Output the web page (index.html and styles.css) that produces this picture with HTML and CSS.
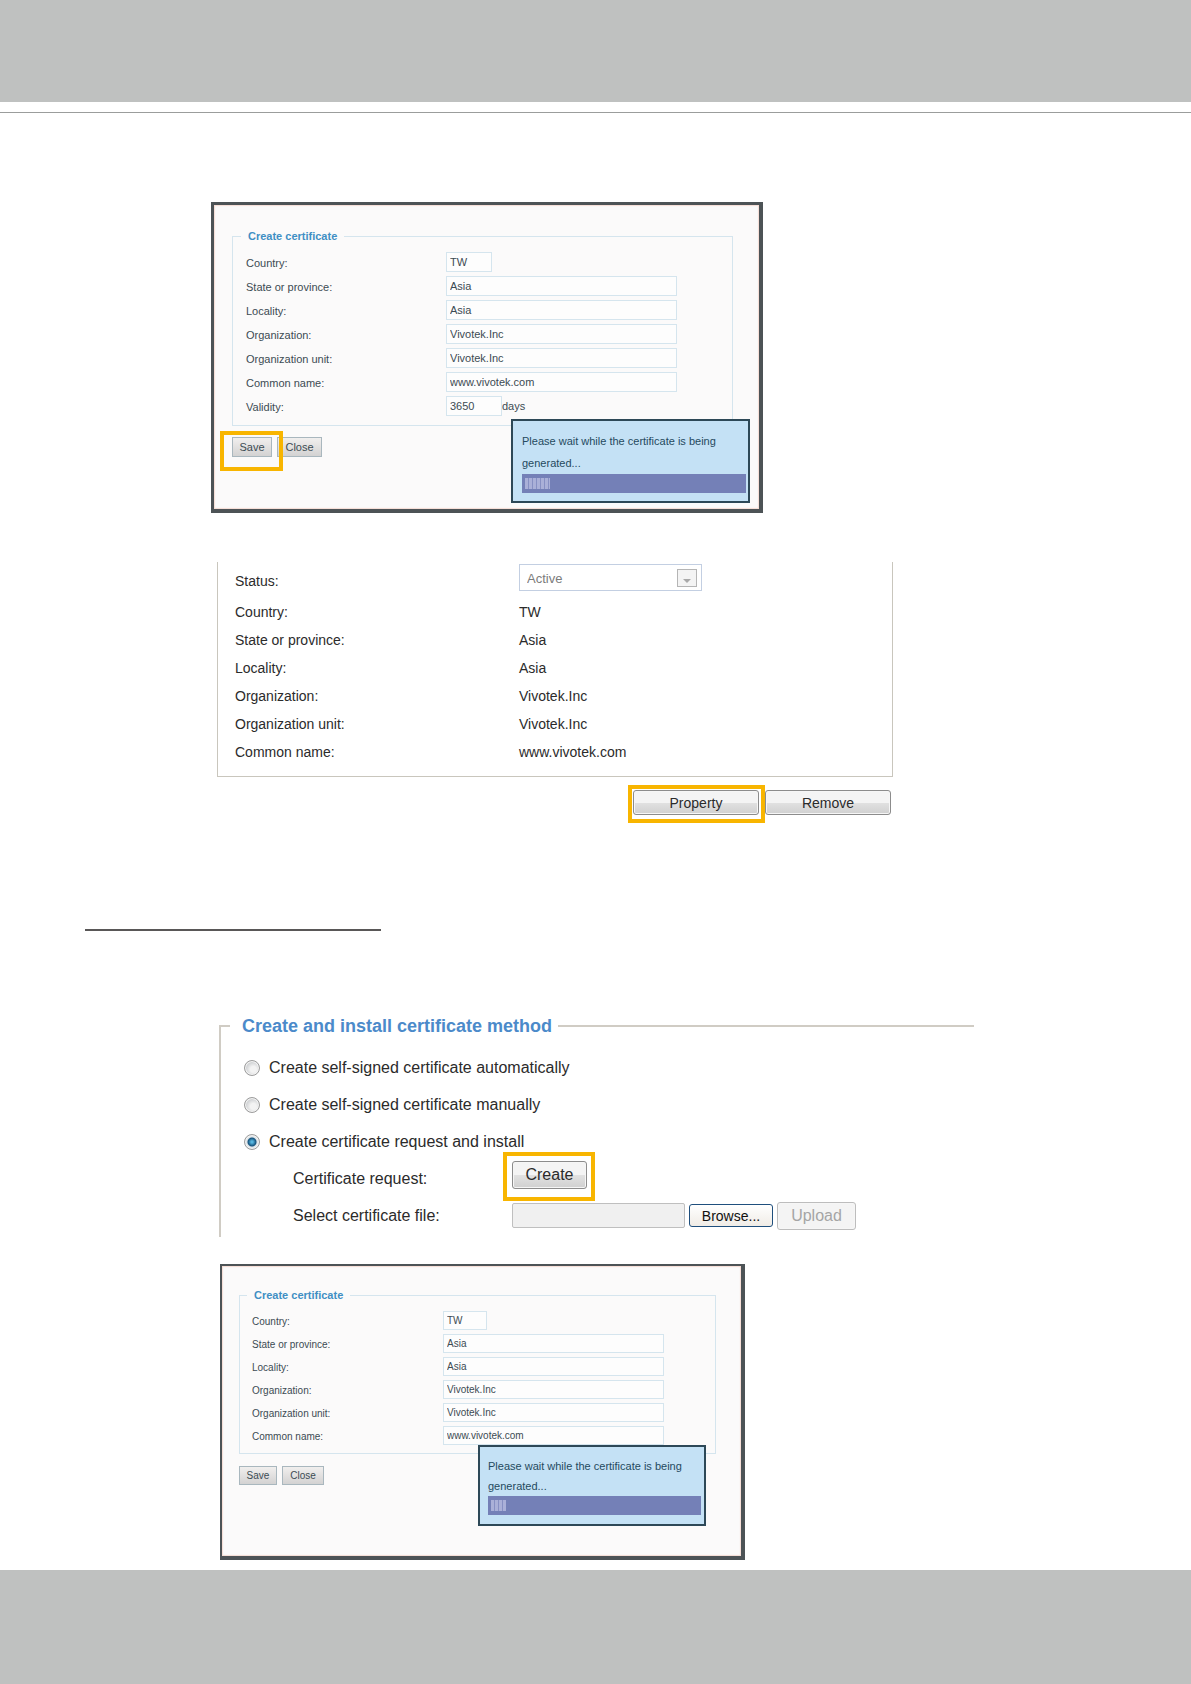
FILE: index.html
```html
<!DOCTYPE html>
<html lang="en">
<head>
<meta charset="utf-8">
<meta name="viewport" content="width=device-width, initial-scale=1">
<title>Create certificate</title>
<link rel="stylesheet" href="styles.css">
</head>
<body>
<header class="band band-top"></header>
<hr class="rule">

<main class="page">
  <form class="dialog">
    <fieldset class="cert">
      <legend>Create certificate</legend>
      <div class="row"><label for="a-country">Country:</label><input id="a-country" class="short" type="text" value="TW"></div>
      <div class="row"><label for="a-state">State or province:</label><input id="a-state" type="text" value="Asia"></div>
      <div class="row"><label for="a-locality">Locality:</label><input id="a-locality" type="text" value="Asia"></div>
      <div class="row"><label for="a-org">Organization:</label><input id="a-org" type="text" value="Vivotek.Inc"></div>
      <div class="row"><label for="a-unit">Organization unit:</label><input id="a-unit" type="text" value="Vivotek.Inc"></div>
      <div class="row"><label for="a-name">Common name:</label><input id="a-name" type="text" value="www.vivotek.com"></div>
      <div class="row"><label for="a-valid">Validity:</label><input id="a-valid" class="medium" type="text" value="3650"><span>days</span></div>
    </fieldset>
    <div class="actions">
      <span class="mark mark-save"><button class="small" type="button">Save</button></span>
      <button class="small small-wide" type="button">Close</button>
    </div>
    <div class="notice" role="status">
      <p>Please wait while the certificate is being generated...</p>
      <div class="bar"><span class="ticks"></span></div>
    </div>
  </form>

  <section class="status">
    <dl class="facts">
      <dt><label for="status">Status:</label></dt>
      <dd>
        <span class="picker">
          <select id="status" disabled><option>Active</option></select>
          <svg class="arrow" viewBox="0 0 20 18" aria-hidden="true"><rect x=".5" y=".5" width="19" height="17" fill="#f4f4f4" stroke="#b5b5b5"/><path d="M6 10h8l-4 4z" fill="#a9a9a9"/></svg>
        </span>
      </dd>
      <dt>Country:</dt><dd>TW</dd>
      <dt>State or province:</dt><dd>Asia</dd>
      <dt>Locality:</dt><dd>Asia</dd>
      <dt>Organization:</dt><dd>Vivotek.Inc</dd>
      <dt>Organization unit:</dt><dd>Vivotek.Inc</dd>
      <dt>Common name:</dt><dd>www.vivotek.com</dd>
    </dl>
    <div class="status-actions">
      <span class="mark mark-property"><button class="push" type="button">Property</button></span>
      <button class="push" type="button">Remove</button>
    </div>
  </section>

  <hr class="underline">

  <fieldset class="method">
    <legend>Create and install certificate method</legend>
    <label class="option"><input type="radio" name="method">Create self-signed certificate automatically</label>
    <label class="option"><input type="radio" name="method">Create self-signed certificate manually</label>
    <label class="option"><input type="radio" name="method" checked>Create certificate request and install</label>
    <div class="step">
      <span>Certificate request:</span>
      <span class="mark mark-create"><button class="push push-create" type="button">Create</button></span>
    </div>
    <div class="step">
      <label for="file">Select certificate file:</label>
      <span class="upload">
        <input id="file" type="text" disabled>
        <button class="browse" type="button">Browse...</button>
        <button class="push push-upload" type="button" disabled>Upload</button>
      </span>
    </div>
  </fieldset>

  <form class="dialog dialog-request">
    <fieldset class="cert">
      <legend>Create certificate</legend>
      <div class="row"><label for="b-country">Country:</label><input id="b-country" class="short" type="text" value="TW"></div>
      <div class="row"><label for="b-state">State or province:</label><input id="b-state" type="text" value="Asia"></div>
      <div class="row"><label for="b-locality">Locality:</label><input id="b-locality" type="text" value="Asia"></div>
      <div class="row"><label for="b-org">Organization:</label><input id="b-org" type="text" value="Vivotek.Inc"></div>
      <div class="row"><label for="b-unit">Organization unit:</label><input id="b-unit" type="text" value="Vivotek.Inc"></div>
      <div class="row"><label for="b-name">Common name:</label><input id="b-name" type="text" value="www.vivotek.com"></div>
    </fieldset>
    <div class="actions">
      <button class="small" type="button">Save</button>
      <button class="small small-wide" type="button">Close</button>
    </div>
    <div class="notice" role="status">
      <p>Please wait while the certificate is being generated...</p>
      <div class="bar"><span class="ticks"></span></div>
    </div>
  </form>
</main>

<footer class="band band-bottom"></footer>
</body>
</html>
```
FILE: styles.css
```css
*, *::before, *::after { box-sizing: border-box; }

body {
  margin: 0;
  background: #fff;
  color: #2b2b2b;
  font: 14px/28px "Liberation Sans", Arial, sans-serif;
}

button, input, select { font: inherit; color: inherit; margin: 0; }
fieldset, dl, dd, p { margin: 0; padding: 0; }

.band { background: #bfc1c0; }
.band-top { height: 102px; }
.band-bottom { height: 114px; }

.rule {
  height: 1px;
  margin: 10px 0 0;
  border: 0;
  background: #9b9d9c;
}

.page { padding: 89px 85px 10px; }

/* Orange frame drawn around a highlighted control */
.mark { position: relative; display: flex; }
.mark::after {
  content: "";
  position: absolute;
  border: 4px solid #f8b500;
  pointer-events: none;
}
.mark-save::after { inset: -6px -11px -14px -12px; }
.mark-property::after { inset: -5px -6px -8px -5px; }
.mark-create::after { inset: -9px -8px -12px -9px; }

/* Certificate dialog */
.dialog {
  --label: 200px;
  --field: 231px;
  --row: 24px;
  position: relative;
  max-width: 552px;
  margin-left: 126px;
  padding: 24px 26px 52px 18px;
  border: solid #4d5356;
  border-width: 3px 4px 4px 3px;
  background: #fbfafa;
  box-shadow: inset 0 0 1px 1px #f5dcd4;
  color: #3c4b53;
  font-size: 11px;
  line-height: 14px;
}

.cert {
  padding: 7px 13px;
  border: 1px solid #d5e5ee;
}
.cert legend {
  margin-left: -5px;
  padding: 0 7px;
  color: #3f8fc4;
  font-weight: bold;
}

.row {
  display: flex;
  align-items: center;
  height: var(--row);
}
.row label { flex: 0 0 var(--label); padding-top: 2px; }
.row input {
  width: var(--field);
  height: 20px;
  padding: 0 3px;
  border: 1px solid #d5e5ee;
  background: #fdfdfd;
}
.row .short { width: 46px; }
.row .medium { width: 56px; }

.actions { display: flex; gap: 5px; margin-top: 11px; }

.small {
  width: 40px;
  height: 20px;
  padding: 0;
  border: 1px solid #a9b7be;
  background: linear-gradient(#f1efee, #d3d2d2);
}
.small-wide { width: 45px; }

.notice {
  position: absolute;
  right: 9px;
  bottom: 6px;
  width: 239px;
  padding: 9px 2px 8px 9px;
  border: 2px solid #2d4857;
  background: #c4e1f5;
  color: #254a5e;
  line-height: 22px;
}
.bar {
  height: 19px;
  padding: 4px 3px;
  background: #7480b7;
}
.ticks {
  display: block;
  width: 25px;
  height: 11px;
  background: repeating-linear-gradient(90deg, #aab0d8 0 3px, #8790c3 3px 4px);
}

.dialog-request {
  --label: 191px;
  --field: 221px;
  --row: 23px;
  max-width: 525px;
  margin: 27px 0 0 135px;
  padding: 22px 25px 71px 17px;
  border-width: 2px 4px 4px 2px;
  font-size: 10px;
}
.dialog-request .cert { padding: 7px 12px 6px; }
.dialog-request legend { font-size: 11px; }
.dialog-request .row input { height: 19px; }
.dialog-request .row .short { width: 44px; }
.dialog-request .actions { margin-top: 12px; }
.dialog-request .small { width: 38px; height: 19px; }
.dialog-request .small-wide { width: 42px; }
.dialog-request .notice {
  right: 35px;
  bottom: 30px;
  width: 228px;
  padding: 9px 3px 9px 8px;
  font-size: 11px;
  line-height: 20px;
}
.dialog-request .ticks { width: 15px; }

/* Certificate status */
.status {
  max-width: 676px;
  margin: 49px 0 0 132px;
}
.facts {
  display: grid;
  grid-template-columns: 284px 1fr;
  padding: 2px 17px 10px;
  border: solid #c9c6bd;
  border-width: 0 1px 1px;
}
.facts dt:first-child { padding-top: 3px; }
.facts dt:first-child + dd { height: 34px; }

.picker {
  position: relative;
  display: block;
  width: 183px;
  height: 27px;
}
.picker select {
  appearance: none;
  width: 100%;
  height: 100%;
  padding: 0 7px;
  border: 1px solid #c3cfe2;
  border-radius: 0;
  background: #fff;
  color: #7c7c7c;
  font-size: 13px;
  opacity: 1;
}
.arrow {
  position: absolute;
  top: 5px;
  right: 5px;
  width: 20px;
  height: 18px;
}

.status-actions {
  display: flex;
  justify-content: flex-end;
  gap: 6px;
  margin-top: 13px;
  padding-right: 2px;
}
.push {
  width: 126px;
  height: 25px;
  padding: 0;
  border: 1px solid #8c8c8c;
  border-radius: 3px;
  background: linear-gradient(#f4f4f4 0 50%, #e2e2e2 50%, #d0d0d0);
  box-shadow: inset 0 0 0 1px #f6f6f6;
  line-height: 20px;
}

.underline {
  width: 296px;
  height: 2px;
  margin: 114px 0 84px;
  border: 0;
  background: #595757;
}

/* Certificate method */
.method {
  max-width: 755px;
  margin-left: 134px;
  padding: 12px 0 3px 9px;
  border: solid #d0ccc4;
  border-width: 2px 0 0 2px;
  font-size: 16px;
  line-height: 37px;
}
.method legend {
  padding: 0 6px 0 12px;
  color: #4b8aca;
  font-size: 18px;
  font-weight: bold;
  line-height: 22px;
}
.option {
  display: flex;
  align-items: center;
  gap: 9px;
  height: 37px;
  padding-left: 14px;
}
.option input {
  appearance: none;
  width: 16px;
  height: 16px;
  border: 1px solid #9c9c9c;
  border-radius: 50%;
  background: radial-gradient(circle at 60% 60%, #f3f3f3 0 25%, #d2d4d6 60%);
  box-shadow: inset 0 0 0 1px #f4f4f4;
}
.option input:checked {
  background: radial-gradient(circle, #55b4de 0 1px, #15527c 4px, #dfe5e9 5px);
}

.step {
  display: grid;
  grid-template-columns: 219px 1fr;
  height: 37px;
  padding-left: 63px;
}
.mark-create { width: 75px; height: 28px; margin-top: 1px; }
.push-create { width: 75px; height: 28px; }

.upload { display: flex; align-items: center; gap: 4px; }
.upload input {
  width: 173px;
  height: 25px;
  border: 1px solid #bfbfbf;
  border-radius: 2px;
  background: #f0f0f0;
}
.browse {
  width: 84px;
  height: 23px;
  padding: 0;
  border: 1px solid #1f4f7d;
  border-radius: 3px;
  background: linear-gradient(#fff, #f0ece6);
  color: #111;
  font-size: 14px;
  line-height: 20px;
}
.push-upload {
  width: 79px;
  height: 28px;
  border-color: #bdbdbd;
  background: #f4f4f4;
  color: #a5a5a5;
}
```
